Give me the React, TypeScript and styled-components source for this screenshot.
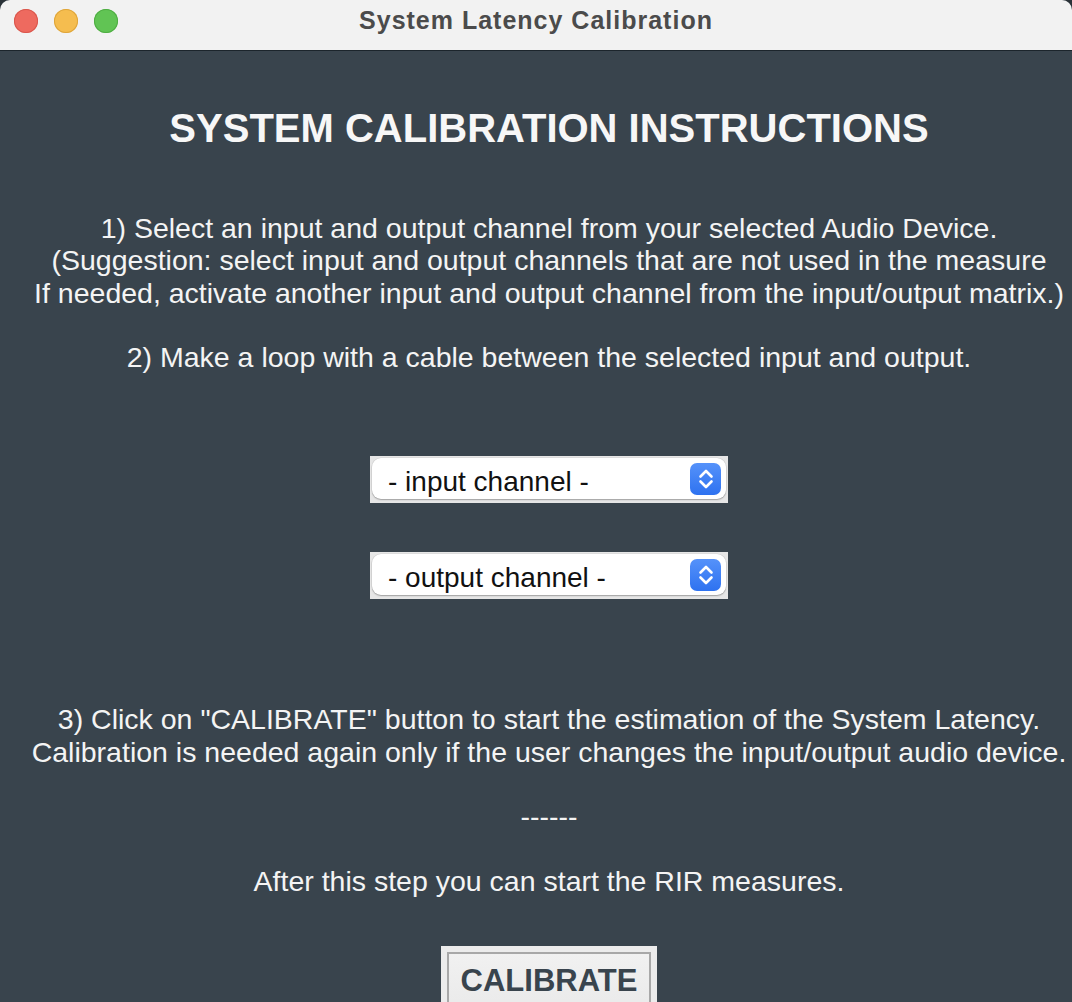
import React from "react";
import styled, { createGlobalStyle } from "styled-components";

const Global = createGlobalStyle`
  html, body { margin: 0; padding: 0; background: #2a3238; }
  body { font-family: "Liberation Sans", Arial, Helvetica, sans-serif; }
  * { box-sizing: border-box; }
`;

const Window = styled.div`
  width: 1072px;
  height: 1002px;
  overflow: hidden;
  border-radius: 10px 10px 0 0;
  background: #39444d;
  display: flex;
  flex-direction: column;
`;

const TitleBar = styled.div`
  height: 51px;
  flex: none;
  background: #f2f2f2;
  border-bottom: 1px solid #1c252c;
  position: relative;
  display: flex;
  align-items: center;
  justify-content: center;
`;

const Lights = styled.div`
  position: absolute;
  left: 14px;
  top: 9px;
  display: flex;
  gap: 16px;
`;

const Light = styled.span<{ $c: string; $b: string }>`
  width: 24px;
  height: 24px;
  border-radius: 50%;
  background: ${(p) => p.$c};
  box-shadow: inset 0 0 0 1px ${(p) => p.$b};
`;

const WinTitle = styled.div`
  font-weight: bold;
  font-size: 25px;
  letter-spacing: 1px;
  color: #4b4b4b;
  margin-top: -9px;
`;

const Content = styled.div`
  flex: 1;
  display: flex;
  flex-direction: column;
  align-items: center;
  padding-top: 57px;
  padding-left: 26px;
  color: #f4f4f4;
`;

const Heading = styled.h1`
  margin: 0;
  font-size: 40px;
  line-height: 40px;
  font-weight: bold;
  color: #f7f7f7;
  white-space: nowrap;
`;

const Text = styled.p<{ $mt: number }>`
  margin: ${(p) => p.$mt}px 0 0;
  font-size: 28.5px;
  line-height: 32.3px;
  text-align: center;
  white-space: pre;
  color: #f4f4f4;
`;

const SelectFrame = styled.div<{ $mt: number }>`
  margin-top: ${(p) => p.$mt}px;
  width: 358px;
  height: 47px;
  flex: none;
  background: #e6e6e6;
  padding: 2px 2px 4px 2px;
`;

const SelectPill = styled.div`
  height: 100%;
  background: #ffffff;
  border-radius: 9px;
  box-shadow: 0 1px 1.5px rgba(0, 0, 0, 0.28), 0 0 0 0.5px rgba(0, 0, 0, 0.08);
  display: flex;
  align-items: center;
  justify-content: space-between;
  padding: 0 5px 0 16px;
`;

const SelectLabel = styled.span`
  font-size: 28px;
  line-height: 32px;
  color: #111;
  margin-top: 6px;
`;

const Stepper = styled.span`
  width: 31px;
  height: 32px;
  border-radius: 7px;
  background: linear-gradient(#5592fa, #2e72f0);
  display: flex;
  align-items: center;
  justify-content: center;
`;

const CalibrateFrame = styled.div`
  margin-top: 49px;
  width: 216px;
  height: 70px;
  background: #ececec;
  padding: 6px 6px 0 6px;
  flex: none;
`;

const CalibrateButton = styled.button`
  width: 100%;
  height: 100%;
  border: 2px solid #a8a8a8;
  border-bottom: none;
  background: linear-gradient(#f1f1f1, #e9e9e9);
  font-family: "Liberation Sans", Arial, sans-serif;
  font-weight: bold;
  font-size: 31px;
  color: #39444d;
  padding: 9px 0 0;
  display: flex;
  justify-content: center;
  align-items: flex-start;
  line-height: 36px;
`;

const Chevrons = () => (
  <svg width="18" height="24" viewBox="0 0 18 24" fill="none">
    <path d="M3.5 9.5 L9 4 L14.5 9.5" stroke="#fff" strokeWidth="2.6" strokeLinecap="round" strokeLinejoin="round" />
    <path d="M3.5 14.5 L9 20 L14.5 14.5" stroke="#fff" strokeWidth="2.6" strokeLinecap="round" strokeLinejoin="round" />
  </svg>
);

const Select = ({ label, mt }: { label: string; mt: number }) => (
  <SelectFrame $mt={mt}>
    <SelectPill>
      <SelectLabel>{label}</SelectLabel>
      <Stepper>
        <Chevrons />
      </Stepper>
    </SelectPill>
  </SelectFrame>
);

export default function App() {
  return (
    <>
      <Global />
      <Window>
        <TitleBar>
          <Lights>
            <Light $c="#ee6a5f" $b="#d9574d" />
            <Light $c="#f5bd4f" $b="#dea53b" />
            <Light $c="#61c454" $b="#4fad43" />
          </Lights>
          <WinTitle>System Latency Calibration</WinTitle>
        </TitleBar>
        <Content>
          <Heading>SYSTEM CALIBRATION INSTRUCTIONS</Heading>
          <Text $mt={64}>
            {"1) Select an input and output channel from your selected Audio Device.\n(Suggestion: select input and output channels that are not used in the measure\nIf needed, activate another input and output channel from the input/output matrix.)\n\n2) Make a loop with a cable between the selected input and output."}
          </Text>
          <Select label="- input channel -" mt={83} />
          <Select label="- output channel -" mt={49} />
          <Text $mt={104}>
            {'3) Click on "CALIBRATE" button to start the estimation of the System Latency.\nCalibration is needed again only if the user changes the input/output audio device.\n\n------\n\nAfter this step you can start the RIR measures.'}
          </Text>
          <CalibrateFrame>
            <CalibrateButton>CALIBRATE</CalibrateButton>
          </CalibrateFrame>
        </Content>
      </Window>
    </>
  );
}
